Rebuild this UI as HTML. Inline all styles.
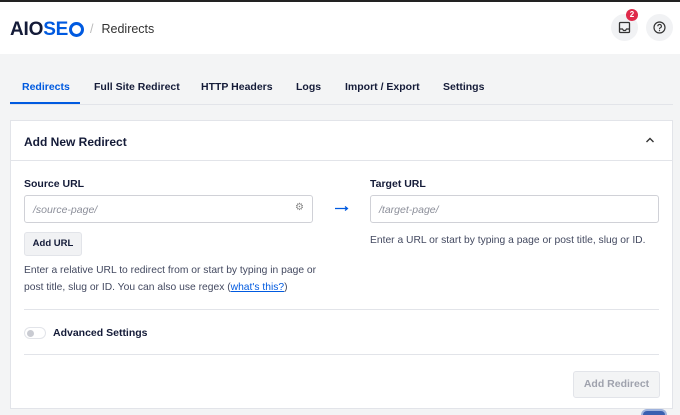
<!DOCTYPE html>
<html><head><style>
*{box-sizing:border-box;margin:0;padding:0}
html,body{width:680px;height:415px;overflow:hidden}
body{background:#f3f4f5;font-family:"Liberation Sans",sans-serif;color:#141b38;position:relative}
.top{position:absolute;left:0;top:0;width:680px;height:2px;background:#222}
.hdr{position:absolute;top:2px;left:0;width:680px;height:52px;background:#fff}
.logo{position:absolute;left:10px;top:17px;font-weight:bold;font-size:19px;letter-spacing:-0.2px;color:#141b38}
.logo b{color:#005ae0}
.crumb{position:absolute;left:90px;top:20px;font-size:12.5px;color:#333}
.crumb span{color:#bbb;margin-right:8px}
.ib{position:absolute;top:12px;width:27px;height:27px;border-radius:50%;background:#f1f2f4}
.badge{position:absolute;left:626px;top:7px;width:12px;height:12px;border-radius:50%;background:#df2a4a;color:#fff;font-size:8px;font-weight:bold;text-align:center;line-height:12px}
.tabs{position:absolute;top:81px;left:0;font-size:10.5px;font-weight:bold;color:#141b38}
.tabs span{position:absolute;white-space:nowrap}
.ul{position:absolute;left:10px;top:102px;width:70px;height:2px;background:#005ae0}
.tl{position:absolute;left:10px;top:104px;width:663px;height:1px;background:#e2e4e9}
.card{position:absolute;left:10px;top:120px;width:663px;height:289px;background:#fff;border:1px solid #e2e4e9}
.abs{position:absolute}
.lbl{font-size:10.5px;font-weight:bold}
.inp{border:1px solid #d0d1d7;border-radius:3px;height:28px;font-size:10.5px;color:#8c8f9a;padding:8px 8px;background:#fff;font-style:italic}
.txt{font-size:10.3px;color:#434960;line-height:17px}
.hr{height:1px;background:#e2e4e9}
</style></head><body>
<div class="top"></div>
<div class="hdr">
<div class="logo">AIO<b>SE</b><b style="display:inline-block;width:15px;height:15px;border:3.5px solid #005ae0;border-radius:50%;vertical-align:-2px;margin-left:1px"></b></div>
<div class="crumb"><span>/</span>Redirects</div>
<div class="ib" style="left:611px"><svg width="27" height="27" viewBox="0 0 27 27"><rect x="8.5" y="8.5" width="10" height="10" rx="1" fill="none" stroke="#333" stroke-width="1.3"/><path d="M8.5 15h3l1 1.5h2l1-1.5h3" fill="none" stroke="#333" stroke-width="1.2"/></svg></div>
<div class="ib" style="left:646px"><svg width="27" height="27" viewBox="0 0 27 27"><circle cx="13.5" cy="13.5" r="5.5" fill="none" stroke="#333" stroke-width="1.2"/><path d="M11.8 12.2a1.8 1.8 0 1 1 2.4 1.7c-.5.2-.7.5-.7 1v.4" fill="none" stroke="#333" stroke-width="1.1"/><circle cx="13.5" cy="16.6" r=".6" fill="#333"/></svg></div>
<div class="badge">2</div>
</div>
<div class="tabs">
<span style="left:22px;color:#005ae0">Redirects</span>
<span style="left:94px">Full Site Redirect</span>
<span style="left:201px">HTTP Headers</span>
<span style="left:296px">Logs</span>
<span style="left:345px">Import / Export</span>
<span style="left:443px">Settings</span>
</div>
<div class="tl"></div><div class="ul"></div>
<div class="card">
<div class="abs" style="left:13px;top:14px;font-size:12px;font-weight:bold">Add New Redirect</div>
<svg class="abs" style="left:634px;top:15px" width="10" height="8" viewBox="0 0 10 8"><path d="M1.5 6L5 2.5 8.5 6" fill="none" stroke="#333" stroke-width="1.4"/></svg>
<div class="abs hr" style="left:0;top:39px;width:661px"></div>
<div class="abs lbl" style="left:13px;top:57px">Source URL</div>
<div class="abs inp" style="left:13px;top:74px;width:289px">/source-page/</div>
<div class="abs" style="left:284px;top:81px;font-size:10px;color:#888">⚙</div>
<svg class="abs" style="left:324px;top:85px" width="14" height="5"><path d="M0 2.5h12M10 0.5l2.5 2-2.5 2" fill="none" stroke="#005ae0" stroke-width="1.2"/></svg>
<div class="abs lbl" style="left:359px;top:57px">Target URL</div>
<div class="abs inp" style="left:359px;top:74px;width:289px">/target-page/</div>
<div class="abs txt" style="left:359px;top:111px">Enter a URL or start by typing a page or post title, slug or ID.</div>
<div class="abs" style="left:13px;top:111px;width:58px;height:24px;background:#f1f2f4;border:1px solid #e2e4e9;border-radius:3px;font-size:9.5px;font-weight:bold;text-align:center;line-height:22px">Add URL</div>
<div class="abs txt" style="left:13px;top:141px;width:305px">Enter a relative URL to redirect from or start by typing in page or post title, slug or ID. You can also use regex (<span style="color:#005ae0;text-decoration:underline">what's this?</span>)</div>
<div class="abs hr" style="left:13px;top:188px;width:635px"></div>
<div class="abs" style="left:13px;top:206px;width:22px;height:12px;border:1px solid #e2e4e9;border-radius:6px"><div style="position:absolute;left:2px;top:2px;width:7px;height:7px;border-radius:50%;background:#c9cbd2"></div></div>
<div class="abs lbl" style="left:42px;top:206px;font-size:10.5px">Advanced Settings</div>
<div class="abs hr" style="left:13px;top:233px;width:635px"></div>
<div class="abs" style="left:562px;top:250px;width:87px;height:27px;background:#f3f4f5;border:1px solid #e2e4e9;border-radius:3px;font-size:10.5px;font-weight:bold;color:#9fa2ad;text-align:center;line-height:25px">Add Redirect</div>
</div>
<div class="abs" style="left:641px;top:409px;width:26px;height:6px;border-radius:13px 13px 0 0;background:#3a5fb0;border:2px solid #9fb3dd;border-bottom:none"></div>
</body></html>
